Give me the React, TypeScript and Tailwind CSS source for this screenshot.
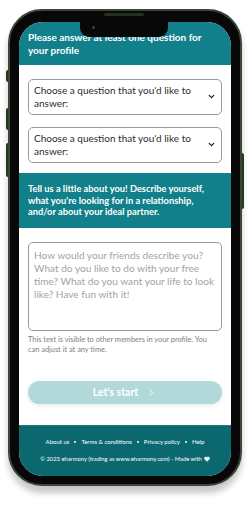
import React from "react";
import { ChevronDown, ChevronRight, Heart } from "lucide-react";

function SelectBox() {
  return (
    <div className="flex items-center justify-between rounded-[5px] border border-[#9a9a9a] bg-white pl-[5px] pr-[5px] h-[36px]">
      <span className="text-[10px] leading-[13px] text-[#2b2b2b] w-[160px]">
        Choose a question that you'd like to answer:
      </span>
      <ChevronDown size={9} strokeWidth={3.5} color="#222" className="mb-[2px]" />
    </div>
  );
}

export default function App() {
  return (
    <div className="w-[250px] h-[508px] bg-white relative pt-[9px] pl-[8px]" style={{ fontFamily: "Lato, 'Open Sans', sans-serif" }}>
      {/* side buttons */}
      <div className="absolute left-[6px] top-[70px] w-[2px] h-[12px] bg-[#2f3b2a] rounded-l" />
      <div className="absolute left-[6px] top-[108px] w-[2px] h-[22px] bg-[#2f3b2a] rounded-l" />
      <div className="absolute left-[6px] top-[143px] w-[2px] h-[34px] bg-[#2f3b2a] rounded-l" />
      <div className="absolute left-[242px] top-[153px] w-[2px] h-[56px] bg-[#2f3b2a] rounded-r" />

      <div className="relative w-[234px] h-[477px] rounded-[34px] bg-[#070807] border-2 border-[#3a4734] pt-[11px] pb-[8px] px-[9px] shadow-[0_7px_6px_rgba(0,0,0,0.22)]">
        {/* speaker */}
        <div className="absolute left-[94px] top-[2px] w-[40px] h-[3px] rounded-full bg-[#27301f]" />
        <div className="relative w-[212px] h-full rounded-[24px] overflow-hidden bg-white flex flex-col">
          {/* notch */}
          <div className="absolute left-[61px] top-0 w-[88px] h-[15px] bg-[#070807] rounded-b-[9px]">
            <div className="absolute left-[12px] top-[4px] w-[3px] h-[3px] rounded-full bg-[#3c3f44]" />
          </div>

          <div className="bg-[#12808a] px-[9px] pt-[9px] pb-[8px]">
            <p className="text-white font-bold text-[10px] leading-[13px]">
              Please answer at least one question for your profile
            </p>
          </div>

          <div className="px-[9px] pt-[14px] pb-[10px] flex flex-col gap-[12px]">
            <SelectBox />
            <SelectBox />
          </div>

          <div className="bg-[#12808a] px-[9px] py-[10px]">
            <p className="text-white font-bold text-[9.3px] leading-[11.7px]">
              Tell us a little about you! Describe yourself, what you're looking for in a relationship, and/or about your ideal partner.
            </p>
          </div>

          <div className="px-[9px] pt-[14px] flex flex-col flex-1">
            <div className="h-[89px] rounded-[5px] border border-[#9a9a9a] pl-[5px] pr-[3px] pt-[6px]">
              <p className="text-[10.1px] leading-[13px] text-[#a3a3a3]">
                How would your friends describe you? What do you like to do with your free time? What do you want your life to look like? Have fun with it!
              </p>
            </div>
            <p className="mt-[4px] w-[186px] text-[7.4px] leading-[9.5px] text-[#808080]">
              This text is visible to other members in your profile. You can adjust it at any time.
            </p>
            <div className="mt-[27px] h-[23px] rounded-full bg-[#b1d9da] flex items-center justify-center gap-[8px] shadow-[0_2px_4px_rgba(0,0,0,0.08)]">
              <span className="text-white font-bold text-[10.5px]">Let's start</span>
              <ChevronRight size={11} strokeWidth={2} color="#fff" />
            </div>
          </div>

          <div className="h-[51px] bg-[#0a686e] border-t border-[#1c7a80] flex flex-col items-center pt-[11px] gap-[8px] text-white">
            <div className="flex items-center gap-[5px] text-[6px] leading-[9px]">
              <span>About us</span>
              <span className="w-[2px] h-[2px] rounded-full bg-white" />
              <span>Terms &amp; conditions</span>
              <span className="w-[2px] h-[2px] rounded-full bg-white" />
              <span>Privacy policy</span>
              <span className="w-[2px] h-[2px] rounded-full bg-white" />
              <span>Help</span>
            </div>
            <div className="flex items-center gap-[2px] text-[5.8px] leading-[9px]">
              <span>© 2023 eharmony (trading as www.eharmony.com) - Made with</span>
              <Heart size={6} fill="#fff" color="#fff" />
            </div>
          </div>
        </div>
      </div>
    </div>
  );
}
